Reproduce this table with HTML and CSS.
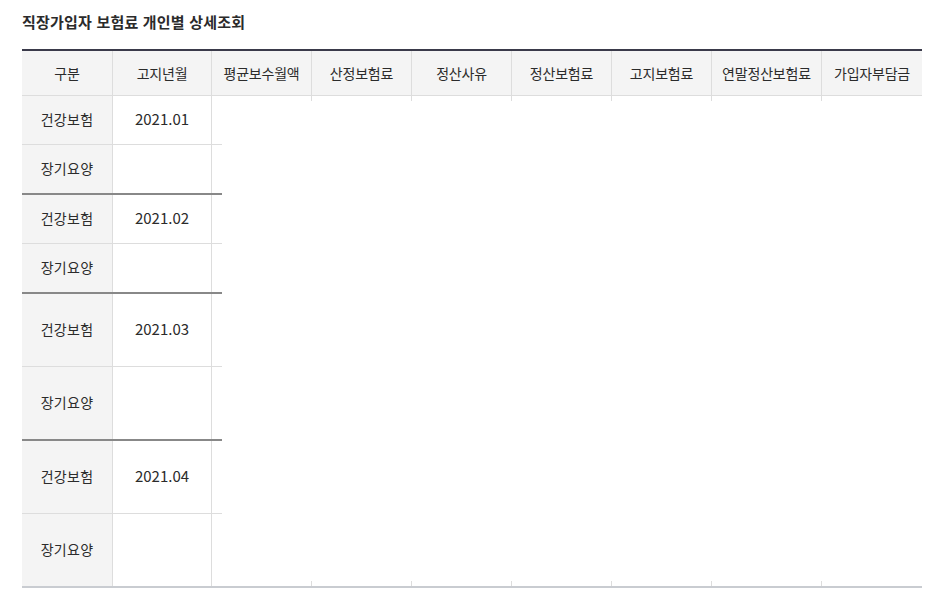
FILE: index.html
```html
<!DOCTYPE html>
<html lang="ko">
<head>
<meta charset="utf-8">
<title>직장가입자 보험료 개인별 상세조회</title>
<link rel="stylesheet" href="styles.css">
</head>
<body>
<div class="page">
  <h2 class="title">직장가입자 보험료 개인별 상세조회</h2>
  <div class="table">
    <div class="thead">
      <div class="th">구분</div>
      <div class="th">고지년월</div>
      <div class="th">평균보수월액</div>
      <div class="th">산정보험료</div>
      <div class="th">정산사유</div>
      <div class="th">정산보험료</div>
      <div class="th">고지보험료</div>
      <div class="th">연말정산보험료</div>
      <div class="th">가입자부담금</div>
    </div>
    <div class="tbody">
      <div class="left">
        <div class="group">
          <div class="row"><div class="c1">건강보험</div><div class="c2">2021.01</div><div class="fill"></div></div>
          <div class="row"><div class="c1">장기요양</div><div class="c2"></div><div class="fill"></div></div>
        </div>
        <div class="group">
          <div class="row"><div class="c1">건강보험</div><div class="c2">2021.02</div><div class="fill"></div></div>
          <div class="row"><div class="c1">장기요양</div><div class="c2"></div><div class="fill"></div></div>
        </div>
        <div class="group tall">
          <div class="row"><div class="c1">건강보험</div><div class="c2">2021.03</div><div class="fill"></div></div>
          <div class="row"><div class="c1">장기요양</div><div class="c2"></div><div class="fill"></div></div>
        </div>
        <div class="group tall">
          <div class="row"><div class="c1">건강보험</div><div class="c2">2021.04</div><div class="fill"></div></div>
          <div class="row"><div class="c1">장기요양</div><div class="c2"></div><div class="fill"></div></div>
        </div>
      </div>
      <div class="right">
        <div class="ticks">
          <span></span><span></span><span></span><span></span><span></span><span></span><span></span>
        </div>
        <div class="spacer"></div>
        <div class="ticks">
          <span></span><span></span><span></span><span></span><span></span><span></span><span></span>
        </div>
      </div>
    </div>
  </div>
</div>
</body>
</html>
```
FILE: styles.css
```css
* { box-sizing: border-box; }
body {
  margin: 0;
  background: #fff;
  color: #2b2b2b;
  font-family: "Noto Sans CJK KR", "Noto Sans", sans-serif;
}
.page {
  padding: 12px 0 0 22px;
}
.title {
  margin: 0 0 17px;
  font-size: 15px;
  line-height: 20px;
  font-weight: 700;
  letter-spacing: 0.2px;
  color: #2b2b2b;
}
.table {
  width: 900px;
}
.thead {
  display: grid;
  grid-template-columns: 91px 99px 100px 100px 100px 100px 100px 110px 100px;
  border-top: 2px solid #3a3a4a;
  border-bottom: 1px solid #dddddd;
  background: #f4f4f4;
}
.th {
  height: 44px;
  padding-bottom: 1px;
  display: flex;
  align-items: center;
  justify-content: center;
  font-size: 14px;
  letter-spacing: -0.2px;
  color: #2b2b2b;
  border-right: 1px solid #dddddd;
}
.th:last-child { border-right: none; }
.tbody {
  display: flex;
  height: 492px;
  border-bottom: 2px solid #c9ccd1;
}
.left {
  width: 200px;
  display: flex;
  flex-direction: column;
}
.group {
  border-bottom: 2px solid #888888;
}
.group:last-child { border-bottom: none; }
.row {
  display: flex;
  height: 48px;
}
.tall .row { height: 72px; }
.row:first-child {
  height: 49px;
  border-bottom: 1px solid #dddddd;
}
.tall .row:first-child { height: 73px; }
.c1, .c2 {
  display: flex;
  align-items: center;
  justify-content: center;
  padding-bottom: 3px;
  font-size: 14px;
  letter-spacing: 0.3px;
  color: #2b2b2b;
  border-right: 1px solid #dddddd;
}
.c1 {
  width: 91px;
  background: #f4f4f4;
}
.c2 {
  width: 99px;
  font-size: 15px;
  letter-spacing: 0;
}
.fill { width: 10px; }
.right {
  width: 700px;
  display: flex;
  flex-direction: column;
}
.spacer { flex: 1; }
.ticks {
  display: grid;
  grid-template-columns: 90px 100px 100px 100px 100px 110px 100px;
  height: 5px;
}
.ticks span { border-right: 1px solid #dddddd; }
.ticks span:last-child { border-right: none; }
```
